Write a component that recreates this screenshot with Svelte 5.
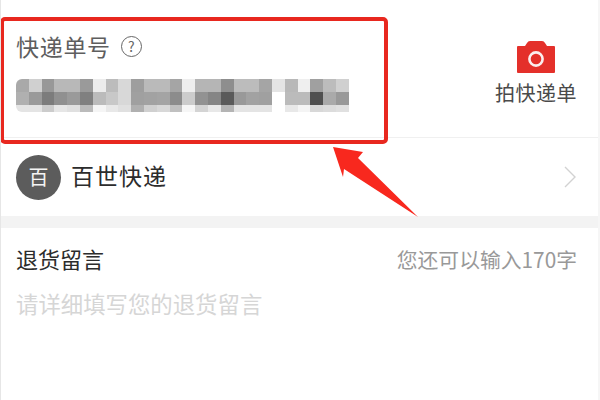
<script lang="ts">
  // blurred tracking number, one string of greys per mosaic row
  const mosaic = [
    ['a9','d0','98','b8','b8','9a','ec','bc','d8','9e','ba','ba','a5','ee','b5','b5','8e','bc','bc','a5','e4','b8','ef','a0','bc','d0'],
    ['b0','9a','7c','90','9a','80','bb','c8','d8','a0','a2','a4','8c','cc','92','85','5a','99','a2','a0','ff','bb','bb','50','aa','99'],
    ['e4','e4','cc','e6','e0','bb','f5','e8','e0','b0','d0','d8','c0','f6','d4','e8','b4','e4','e4','e4','ff','e8','f4','d8','dc','e0']
  ];
</script>

<div class="page">
  <section class="waybill">
    <div class="waybill-left">
      <div class="label-row">
        <span class="label">快递单号</span>
        <span class="help">?</span>
      </div>
      <div class="mosaic">
        {#each mosaic as row}
          {#each row as c}
            <i style="background: #{c}{c}{c}"></i>
          {/each}
        {/each}
      </div>
    </div>
    <div class="scan">
      <svg width="38" height="33" viewBox="0 0 38 33">
        <path d="M1 6h7l2-3q1-2 3-2h12q2 0 3 2l2 3h7q1 0 1 1v25q0 1-1 1H1q-1 0-1-1V7q0-1 1-1z" fill="#e4302a" />
        <circle cx="19" cy="19" r="6.6" fill="none" stroke="#fbeeee" stroke-width="2.6" />
      </svg>
      <span>拍快递单</span>
    </div>
  </section>

  <section class="carrier">
    <span class="avatar">百</span>
    <span class="carrier-name">百世快递</span>
    <svg class="chevron" width="14" height="22" viewBox="0 0 14 22">
      <path d="M2 1l10 10L2 21" fill="none" stroke="#d2d2d2" stroke-width="1.4" />
    </svg>
  </section>

  <div class="band"></div>

  <section class="note">
    <div class="note-head">
      <span class="note-title">退货留言</span>
      <span class="note-count">您还可以输入170字</span>
    </div>
    <div class="note-hint">请详细填写您的退货留言</div>
  </section>

  <div class="callout"></div>
  <svg class="arrow" width="600" height="400" viewBox="0 0 600 400">
    <path d="M333 147L363 152L358 158L418 217L344 169L343 177z" fill="#f8281e" />
  </svg>
</div>

<style>
  :global(body) {
    margin: 0;
    background: #fff;
  }

  .page {
    position: relative;
    width: 600px;
    height: 400px;
    box-sizing: border-box;
    overflow: hidden;
    background: #fff;
    border-left: 1px solid #e6e6e6;
    border-right: 2px solid #f6f6f6;
    font-family: "Noto Sans CJK SC", "Noto Sans", sans-serif;
  }

  .waybill {
    display: flex;
    justify-content: space-between;
    height: 138px;
    box-sizing: border-box;
    padding: 31px 21px 0 15px;
    border-bottom: 1px solid #f0f0f0;
  }

  .label-row {
    display: flex;
    align-items: center;
    gap: 10px;
    height: 30px;
  }

  .label {
    font-size: 23px;
    letter-spacing: 0.7px;
    line-height: 30px;
    color: #5e5e5e;
  }

  .help {
    width: 21px;
    height: 21px;
    box-sizing: border-box;
    border: 1px solid #666;
    border-radius: 50%;
    font-size: 14px;
    line-height: 19px;
    text-align: center;
    color: #666;
  }

  .mosaic {
    display: grid;
    grid-template-columns: repeat(26, 12.8px);
    grid-template-rows: 13px 13px 7px;
    margin-top: 18px;
    border-radius: 6px 0 0 6px;
    overflow: hidden;
  }

  .mosaic i {
    display: block;
  }

  .scan {
    display: flex;
    flex-direction: column;
    align-items: center;
    gap: 5px;
    padding-top: 9px;
  }

  .scan span {
    font-size: 20px;
    letter-spacing: 0.5px;
    line-height: 30px;
    color: #4a4a4a;
  }

  .carrier {
    display: flex;
    align-items: center;
    gap: 10px;
    height: 78px;
    box-sizing: border-box;
    padding: 0 21px 0 15px;
  }

  .avatar {
    width: 45px;
    height: 45px;
    border-radius: 50%;
    background: #5c5c5c;
    color: #f4f4f4;
    font-size: 20px;
    line-height: 43px;
    text-align: center;
  }

  .carrier-name {
    flex: 1;
    margin-bottom: 4px;
    font-size: 23px;
    letter-spacing: 1px;
    line-height: 26px;
    color: #2c2c2c;
  }

  .chevron {
    margin-top: -1px;
  }

  .band {
    height: 12px;
    background: #f3f3f3;
  }

  .note {
    padding: 15px 21px 0 15px;
  }

  .note-head {
    display: flex;
    justify-content: space-between;
    align-items: center;
    height: 30px;
  }

  .note-title {
    font-size: 22px;
    color: #2c2c2c;
  }

  .note-count {
    margin-top: 2px;
    font-size: 20.8px;
    color: #999;
  }

  .note-hint {
    margin-top: 15px;
    font-size: 22.4px;
    line-height: 30px;
    color: #d6d6d6;
  }

  .callout {
    position: absolute;
    left: -1px;
    top: 17px;
    width: 388px;
    height: 127px;
    box-sizing: border-box;
    border: 4px solid #e8281f;
    border-radius: 5px;
  }

  .arrow {
    position: absolute;
    left: -1px;
    top: 0;
  }
</style>
